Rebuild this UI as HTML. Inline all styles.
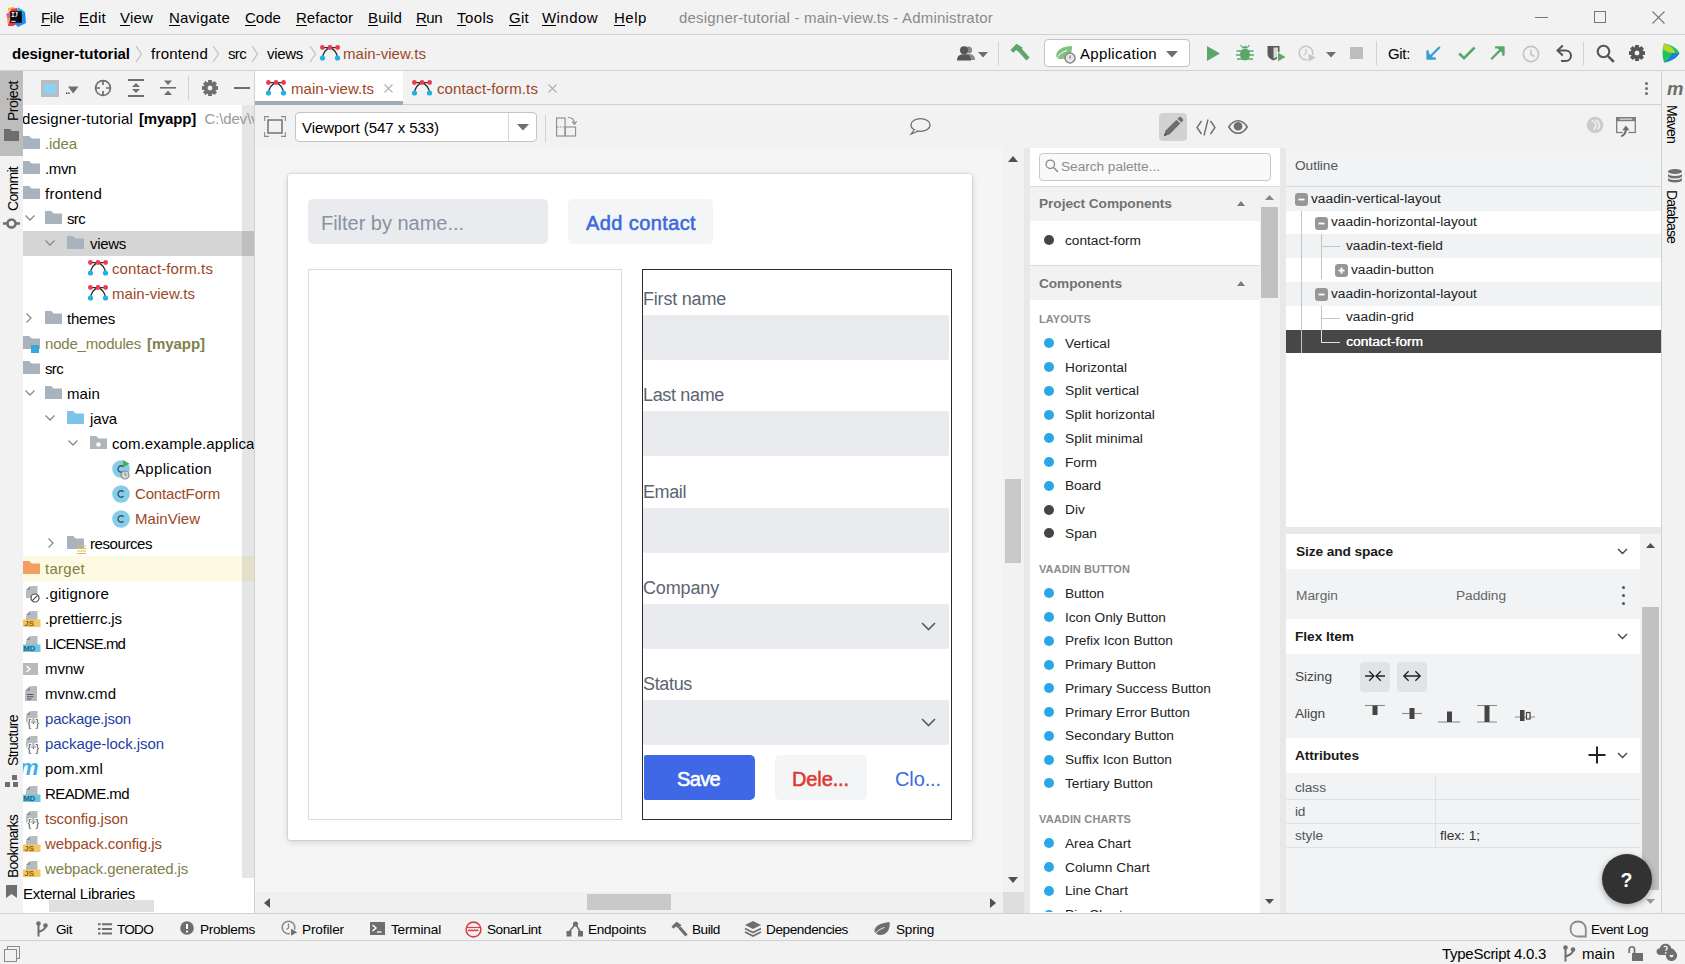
<!DOCTYPE html>
<html><head><meta charset="utf-8"><title>designer-tutorial</title><style>
html,body{margin:0;padding:0;}
body{width:1685px;height:964px;overflow:hidden;background:#f2f2f2;font-family:"Liberation Sans",sans-serif;position:relative;}
.b{position:absolute;box-sizing:border-box;}
.t{position:absolute;white-space:nowrap;font-family:"Liberation Sans",sans-serif;}
svg{overflow:visible}
</style></head><body>
<div class="b" style="left:0px;top:71px;width:23px;height:842px;background:#f2f2f2;"></div>
<div class="b" style="left:0px;top:71px;width:23px;height:85px;background:#bdbdbd;"></div>
<div class="t" style="left:13px;top:121px;font-size:14px;line-height:18px;height:18px;color:#000;letter-spacing:-0.510px;transform-origin:0 0;transform:rotate(-90deg) translateY(-9px);">Project</div>
<div class="t" style="left:13px;top:211px;font-size:14px;line-height:18px;height:18px;color:#000;letter-spacing:-0.704px;transform-origin:0 0;transform:rotate(-90deg) translateY(-9px);">Commit</div>
<div class="t" style="left:13px;top:766px;font-size:14px;line-height:18px;height:18px;color:#000;letter-spacing:-0.644px;transform-origin:0 0;transform:rotate(-90deg) translateY(-9px);">Structure</div>
<div class="t" style="left:13px;top:878px;font-size:14px;line-height:18px;height:18px;color:#000;letter-spacing:-0.780px;transform-origin:0 0;transform:rotate(-90deg) translateY(-9px);">Bookmarks</div>
<svg class="b" style="left:4px;top:129px;" width="15" height="12" viewBox="0 0 15 12"><path d="M0 0H6L8 2H15V12H0Z" fill="#6e6e6e"/></svg>
<svg class="b" style="left:3px;top:217px;" width="17" height="13" viewBox="0 0 17 13"><circle cx="8.5" cy="6.5" r="4" fill="none" stroke="#6e6e6e" stroke-width="2.6"/><path d="M0 6.5H4M13 6.5H17" stroke="#6e6e6e" stroke-width="2.4"/></svg>
<svg class="b" style="left:5px;top:775px;" width="14" height="12" viewBox="0 0 14 12"><rect x="7" y="0" width="5" height="5" fill="#6e6e6e"/><rect x="0" y="7" width="5" height="5" fill="#6e6e6e"/><rect x="8" y="7" width="5" height="5" fill="#6e6e6e"/></svg>
<svg class="b" style="left:6px;top:885px;" width="11" height="13" viewBox="0 0 11 13"><path d="M0 0H11V13L5.5 9L0 13Z" fill="#6e6e6e"/></svg>
<div class="b" style="left:23px;top:105px;width:219px;height:808px;background:#fff;"></div>
<div class="b" style="left:242px;top:105px;width:12px;height:808px;background:#fff;"></div>
<div class="b" style="left:254px;top:71px;width:1px;height:842px;background:#d1d1d1;"></div>
<div class="b" style="left:23px;top:231px;width:231px;height:25px;background:#d5d5d5;"></div>
<div class="b" style="left:23px;top:556px;width:231px;height:25px;background:#fcfae1;"></div>
<div class="b" style="left:242px;top:105px;width:12px;height:773px;background:rgba(0,0,0,0.1);"></div>
<div class="b" style="left:23px;top:106px;width:231px;height:25px;overflow:hidden">
<div class="t " style="left:-1px;top:2.0px;height:21px;line-height:21px;font-size:15px;color:#000;letter-spacing:0.203px;">designer-tutorial</div>
<div class="t " style="left:116px;top:2.0px;height:21px;line-height:21px;font-size:15px;color:#000;font-weight:bold;letter-spacing:-0.191px;">[myapp]</div>
<div class="t " style="left:181.5px;top:2.0px;height:21px;line-height:21px;font-size:15px;color:#999;letter-spacing:-0.151px;">C:\dev\va</div>
</div>
<div class="t " style="left:45px;top:133.0px;height:21px;line-height:21px;font-size:15px;color:#80804a;letter-spacing:-0.105px;">.idea</div>
<div class="t " style="left:45px;top:158.0px;height:21px;line-height:21px;font-size:15px;color:#000;letter-spacing:-0.376px;">.mvn</div>
<div class="t " style="left:45px;top:183.0px;height:21px;line-height:21px;font-size:15px;color:#000;letter-spacing:0.245px;">frontend</div>
<div class="t " style="left:67px;top:208.0px;height:21px;line-height:21px;font-size:15px;color:#000;letter-spacing:-0.665px;">src</div>
<div class="t " style="left:90px;top:233.0px;height:21px;line-height:21px;font-size:15px;color:#000;letter-spacing:-0.302px;">views</div>
<div class="t " style="left:112px;top:258.0px;height:21px;line-height:21px;font-size:15px;color:#9c4726;letter-spacing:0.121px;">contact-form.ts</div>
<div class="t " style="left:112px;top:283.0px;height:21px;line-height:21px;font-size:15px;color:#9c4726;letter-spacing:0.040px;">main-view.ts</div>
<div class="t " style="left:67px;top:308.0px;height:21px;line-height:21px;font-size:15px;color:#000;letter-spacing:-0.198px;">themes</div>
<div class="t " style="left:45px;top:333.0px;height:21px;line-height:21px;font-size:15px;color:#80804a;letter-spacing:-0.201px;">node_modules</div>
<div class="t " style="left:147px;top:333.0px;height:21px;line-height:21px;font-size:15px;color:#80804a;font-weight:bold;letter-spacing:-0.048px;">[myapp]</div>
<div class="t " style="left:45px;top:358.0px;height:21px;line-height:21px;font-size:15px;color:#000;letter-spacing:-0.665px;">src</div>
<div class="t " style="left:67px;top:383.0px;height:21px;line-height:21px;font-size:15px;color:#000;letter-spacing:0.122px;">main</div>
<div class="t " style="left:90px;top:408.0px;height:21px;line-height:21px;font-size:15px;color:#000;letter-spacing:-0.129px;">java</div>
<div class="b" style="left:112px;top:431px;width:142px;height:25px;overflow:hidden">
<div class="t " style="left:0px;top:2.0px;height:21px;line-height:21px;font-size:15px;color:#000;letter-spacing:0.083px;">com.example.application</div>
</div>
<div class="t " style="left:135px;top:458.0px;height:21px;line-height:21px;font-size:15px;color:#000;letter-spacing:0.329px;">Application</div>
<div class="t " style="left:135px;top:483.0px;height:21px;line-height:21px;font-size:15px;color:#9c4726;letter-spacing:-0.154px;">ContactForm</div>
<div class="t " style="left:135px;top:508.0px;height:21px;line-height:21px;font-size:15px;color:#9c4726;letter-spacing:0.031px;">MainView</div>
<div class="t " style="left:90px;top:533.0px;height:21px;line-height:21px;font-size:15px;color:#000;letter-spacing:-0.429px;">resources</div>
<div class="t " style="left:45px;top:558.0px;height:21px;line-height:21px;font-size:15px;color:#80804a;letter-spacing:0.274px;">target</div>
<div class="t " style="left:45px;top:583.0px;height:21px;line-height:21px;font-size:15px;color:#000;letter-spacing:0.229px;">.gitignore</div>
<div class="t " style="left:45px;top:608.0px;height:21px;line-height:21px;font-size:15px;color:#000;letter-spacing:-0.096px;">.prettierrc.js</div>
<div class="t " style="left:45px;top:633.0px;height:21px;line-height:21px;font-size:15px;color:#000;letter-spacing:-0.919px;">LICENSE.md</div>
<div class="t " style="left:45px;top:658.0px;height:21px;line-height:21px;font-size:15px;color:#000;letter-spacing:-0.043px;">mvnw</div>
<div class="t " style="left:45px;top:683.0px;height:21px;line-height:21px;font-size:15px;color:#000;letter-spacing:0.019px;">mvnw.cmd</div>
<div class="t " style="left:45px;top:708.0px;height:21px;line-height:21px;font-size:15px;color:#1f3f9f;letter-spacing:-0.200px;">package.json</div>
<div class="t " style="left:45px;top:733.0px;height:21px;line-height:21px;font-size:15px;color:#1f3f9f;letter-spacing:-0.063px;">package-lock.json</div>
<div class="t " style="left:45px;top:758.0px;height:21px;line-height:21px;font-size:15px;color:#000;letter-spacing:0.189px;">pom.xml</div>
<div class="t " style="left:45px;top:783.0px;height:21px;line-height:21px;font-size:15px;color:#000;letter-spacing:-0.576px;">README.md</div>
<div class="t " style="left:45px;top:808.0px;height:21px;line-height:21px;font-size:15px;color:#9c4726;letter-spacing:-0.029px;">tsconfig.json</div>
<div class="t " style="left:45px;top:833.0px;height:21px;line-height:21px;font-size:15px;color:#9c4726;letter-spacing:-0.082px;">webpack.config.js</div>
<div class="t " style="left:45px;top:858.0px;height:21px;line-height:21px;font-size:15px;color:#80804a;letter-spacing:-0.146px;">webpack.generated.js</div>
<div class="t " style="left:23px;top:883.0px;height:21px;line-height:21px;font-size:15px;color:#000;letter-spacing:-0.262px;">External Libraries</div>
<div class="b" style="left:23px;top:106px;width:219px;height:806px;overflow:hidden">
<svg class="b" style="left:0px;top:30px;" width="17" height="13" viewBox="0 0 17 13"><path d="M0 0H6.2L8.6 2.6H17V13H0Z" fill="#a9b3be"/></svg>
<svg class="b" style="left:0px;top:55px;" width="17" height="13" viewBox="0 0 17 13"><path d="M0 0H6.2L8.6 2.6H17V13H0Z" fill="#a9b3be"/></svg>
<svg class="b" style="left:0px;top:80px;" width="17" height="13" viewBox="0 0 17 13"><path d="M0 0H6.2L8.6 2.6H17V13H0Z" fill="#a9b3be"/></svg>
<svg class="b" style="left:0px;top:230px;" width="17" height="13" viewBox="0 0 17 13"><path d="M0 0H6.2L8.6 2.6H17V13H0Z" fill="#a9b3be"/></svg>
<svg class="b" style="left:0px;top:255px;" width="17" height="13" viewBox="0 0 17 13"><path d="M0 0H6.2L8.6 2.6H17V13H0Z" fill="#a9b3be"/></svg>
<svg class="b" style="left:0px;top:455px;" width="17" height="13" viewBox="0 0 17 13"><path d="M0 0H6.2L8.6 2.6H17V13H0Z" fill="#f49d62"/></svg>
<svg class="b" style="left:8px;top:239px;" width="8" height="8" viewBox="0 0 8 8"><rect width="8" height="8" fill="#35a8dc"/></svg>
<svg class="b" style="left:1px;top:480px;" width="16" height="16" viewBox="0 0 16 16"><path d="M7 0H13.5V12H2V5Z" fill="#b7bbc0"/><path d="M6 0V4H2Z" fill="#90959c"/><circle cx="11" cy="12" r="4" fill="#fff" stroke="#4d4d4d" stroke-width="1.2"/><path d="M8.3 14.7L13.7 9.3" stroke="#4d4d4d" stroke-width="1.2"/></svg>
<svg class="b" style="left:1px;top:505px;" width="16" height="16" viewBox="0 0 16 16"><path d="M7 0H13.5V12H2V5Z" fill="#b7bbc0"/><path d="M6 0V4H2Z" fill="#90959c"/><rect x="-1" y="8.5" width="17.5" height="7.5" fill="#f5c762"/><text x="0.2" y="15.3" font-size="8" font-weight="bold" fill="#8a6414" font-family="Liberation Sans">JS</text></svg>
<svg class="b" style="left:1px;top:530px;" width="16" height="16" viewBox="0 0 16 16"><path d="M7 0H13.5V12H2V5Z" fill="#b7bbc0"/><path d="M6 0V4H2Z" fill="#90959c"/><rect x="-1" y="8.5" width="17.5" height="7.5" fill="#6cc5e6"/><text x="-0.6" y="15.2" font-size="7.6" font-weight="bold" fill="#23607c" font-family="Liberation Sans">MD</text></svg>
<svg class="b" style="left:1px;top:555px;" width="16" height="16" viewBox="0 0 16 16"><rect x="-1" y="2" width="15" height="12" fill="#b7bbc0"/><path d="M2.5 5L6 8L2.5 11" stroke="#fff" stroke-width="1.5" fill="none"/></svg>
<svg class="b" style="left:1px;top:580px;" width="16" height="16" viewBox="0 0 16 16"><path d="M7 0H13V15H1V6Z" fill="#b7bbc0"/><path d="M6 0V5H1Z" fill="#90959c"/><path d="M3 8.5H9.5M3 10.8H9.5M3 13H7.5" stroke="#555" stroke-width="1.1"/></svg>
<svg class="b" style="left:1px;top:605px;" width="16" height="16" viewBox="0 0 16 16"><path d="M7 0H13.5V12H2V5Z" fill="#b7bbc0"/><path d="M6 0V4H2Z" fill="#90959c"/><text x="3.6" y="15.8" font-size="11" textLength="11.5" fill="#4d4d4d" stroke="#fff" stroke-width="2.2" paint-order="stroke" font-family="Liberation Sans">{}</text><circle cx="9.4" cy="12.3" r="0.7" fill="#4d4d4d"/></svg>
<svg class="b" style="left:1px;top:630px;" width="16" height="16" viewBox="0 0 16 16"><path d="M7 0H13.5V12H2V5Z" fill="#b7bbc0"/><path d="M6 0V4H2Z" fill="#90959c"/><text x="3.6" y="15.8" font-size="11" textLength="11.5" fill="#4d4d4d" stroke="#fff" stroke-width="2.2" paint-order="stroke" font-family="Liberation Sans">{}</text><circle cx="9.4" cy="12.3" r="0.7" fill="#4d4d4d"/></svg>
<svg class="b" style="left:-1px;top:655px;" width="16" height="16" viewBox="0 0 16 16"><text x="-3" y="14" font-size="22" font-style="italic" font-weight="bold" fill="#3fb0e6" font-family="Liberation Sans">m</text></svg>
<svg class="b" style="left:1px;top:680px;" width="16" height="16" viewBox="0 0 16 16"><path d="M7 0H13.5V12H2V5Z" fill="#b7bbc0"/><path d="M6 0V4H2Z" fill="#90959c"/><rect x="-1" y="8.5" width="17.5" height="7.5" fill="#6cc5e6"/><text x="-0.6" y="15.2" font-size="7.6" font-weight="bold" fill="#23607c" font-family="Liberation Sans">MD</text></svg>
<svg class="b" style="left:1px;top:705px;" width="16" height="16" viewBox="0 0 16 16"><path d="M7 0H13.5V12H2V5Z" fill="#b7bbc0"/><path d="M6 0V4H2Z" fill="#90959c"/><text x="3.6" y="15.8" font-size="11" textLength="11.5" fill="#4d4d4d" stroke="#fff" stroke-width="2.2" paint-order="stroke" font-family="Liberation Sans">{}</text><circle cx="9.4" cy="12.3" r="0.7" fill="#4d4d4d"/></svg>
<svg class="b" style="left:1px;top:730px;" width="16" height="16" viewBox="0 0 16 16"><path d="M7 0H13.5V12H2V5Z" fill="#b7bbc0"/><path d="M6 0V4H2Z" fill="#90959c"/><rect x="-1" y="8.5" width="17.5" height="7.5" fill="#f5c762"/><text x="0.2" y="15.3" font-size="8" font-weight="bold" fill="#8a6414" font-family="Liberation Sans">JS</text></svg>
<svg class="b" style="left:1px;top:755px;" width="16" height="16" viewBox="0 0 16 16"><path d="M7 0H13.5V12H2V5Z" fill="#b7bbc0"/><path d="M6 0V4H2Z" fill="#90959c"/><rect x="-1" y="8.5" width="17.5" height="7.5" fill="#f5c762"/><text x="0.2" y="15.3" font-size="8" font-weight="bold" fill="#8a6414" font-family="Liberation Sans">JS</text></svg>
</div>
<svg class="b" style="left:45px;top:211px;" width="17" height="13" viewBox="0 0 17 13"><path d="M0 0H6.2L8.6 2.6H17V13H0Z" fill="#a9b3be"/></svg>
<svg class="b" style="left:25px;top:215px;" width="10" height="6" viewBox="0 0 10 6"><path d="M0.5 0.5L5 5L9.5 0.5" fill="none" stroke="#8a8a8a" stroke-width="1.3"/></svg>
<svg class="b" style="left:45px;top:311px;" width="17" height="13" viewBox="0 0 17 13"><path d="M0 0H6.2L8.6 2.6H17V13H0Z" fill="#a9b3be"/></svg>
<svg class="b" style="left:26px;top:313px;" width="6" height="10" viewBox="0 0 6 10"><path d="M0.5 0.5L5 5L0.5 9.5" fill="none" stroke="#8a8a8a" stroke-width="1.3"/></svg>
<svg class="b" style="left:45px;top:386px;" width="17" height="13" viewBox="0 0 17 13"><path d="M0 0H6.2L8.6 2.6H17V13H0Z" fill="#a9b3be"/></svg>
<svg class="b" style="left:25px;top:390px;" width="10" height="6" viewBox="0 0 10 6"><path d="M0.5 0.5L5 5L9.5 0.5" fill="none" stroke="#8a8a8a" stroke-width="1.3"/></svg>
<svg class="b" style="left:67px;top:236px;" width="17" height="13" viewBox="0 0 17 13"><path d="M0 0H6.2L8.6 2.6H17V13H0Z" fill="#a9b3be"/></svg>
<svg class="b" style="left:45px;top:240px;" width="10" height="6" viewBox="0 0 10 6"><path d="M0.5 0.5L5 5L9.5 0.5" fill="none" stroke="#8a8a8a" stroke-width="1.3"/></svg>
<svg class="b" style="left:67px;top:411px;" width="17" height="13" viewBox="0 0 17 13"><path d="M0 0H6.2L8.6 2.6H17V13H0Z" fill="#7cc4ea"/></svg>
<svg class="b" style="left:45px;top:415px;" width="10" height="6" viewBox="0 0 10 6"><path d="M0.5 0.5L5 5L9.5 0.5" fill="none" stroke="#8a8a8a" stroke-width="1.3"/></svg>
<svg class="b" style="left:67px;top:536px;" width="17" height="13" viewBox="0 0 17 13"><path d="M0 0H6.2L8.6 2.6H17V13H0Z" fill="#a9b3be"/></svg>
<svg class="b" style="left:48px;top:538px;" width="6" height="10" viewBox="0 0 6 10"><path d="M0.5 0.5L5 5L0.5 9.5" fill="none" stroke="#8a8a8a" stroke-width="1.3"/></svg>
<svg class="b" style="left:77px;top:545px;" width="9" height="9" viewBox="0 0 9 9"><path d="M0 1H9M0 3.5H9M0 6H9M0 8.5H9" stroke="#e0b95c" stroke-width="1.2"/></svg>
<svg class="b" style="left:88px;top:260px;" width="20" height="16" viewBox="0 0 20 16"><path d="M2.3 13C3.2 8 6 4 10 2.6C14 4 16.8 8 17.7 13" fill="none" stroke="#26282b" stroke-width="1.3"/><path d="M2.5 2.6H17.5" stroke="#26282b" stroke-width="1.2"/><circle cx="2.4" cy="2.5" r="2.4" fill="#eb3b52"/><circle cx="10" cy="2.5" r="2.4" fill="#eb3b52"/><circle cx="17.6" cy="2.5" r="2.4" fill="#eb3b52"/><circle cx="2.5" cy="13" r="2.6" fill="#1eb3e3"/><circle cx="17.5" cy="13" r="2.6" fill="#1eb3e3"/></svg>
<svg class="b" style="left:88px;top:285px;" width="20" height="16" viewBox="0 0 20 16"><path d="M2.3 13C3.2 8 6 4 10 2.6C14 4 16.8 8 17.7 13" fill="none" stroke="#26282b" stroke-width="1.3"/><path d="M2.5 2.6H17.5" stroke="#26282b" stroke-width="1.2"/><circle cx="2.4" cy="2.5" r="2.4" fill="#eb3b52"/><circle cx="10" cy="2.5" r="2.4" fill="#eb3b52"/><circle cx="17.6" cy="2.5" r="2.4" fill="#eb3b52"/><circle cx="2.5" cy="13" r="2.6" fill="#1eb3e3"/><circle cx="17.5" cy="13" r="2.6" fill="#1eb3e3"/></svg>
<svg class="b" style="left:90px;top:436px;" width="17" height="13" viewBox="0 0 17 13"><path d="M0 0H6.2L8.6 2.6H17V13H0Z" fill="#b0b5ba"/></svg>
<svg class="b" style="left:68px;top:440px;" width="10" height="6" viewBox="0 0 10 6"><path d="M0.5 0.5L5 5L9.5 0.5" fill="none" stroke="#8a8a8a" stroke-width="1.3"/></svg>
<svg class="b" style="left:96px;top:442px;" width="5" height="5" viewBox="0 0 5 5"><circle cx="2.5" cy="2.5" r="2.3" fill="#fff"/></svg>
<svg class="b" style="left:112px;top:459.5px;" width="18" height="18" viewBox="0 0 18 18"><circle cx="9" cy="9" r="8.8" fill="#86cdea"/><path d="M11.6 6.9A3.2 3.2 0 1 0 11.6 11.1" fill="none" stroke="#3a5560" stroke-width="1.4"/></svg>
<svg class="b" style="left:112px;top:484.5px;" width="18" height="18" viewBox="0 0 18 18"><circle cx="9" cy="9" r="8.8" fill="#86cdea"/><path d="M11.6 6.9A3.2 3.2 0 1 0 11.6 11.1" fill="none" stroke="#3a5560" stroke-width="1.4"/></svg>
<svg class="b" style="left:112px;top:509.5px;" width="18" height="18" viewBox="0 0 18 18"><circle cx="9" cy="9" r="8.8" fill="#86cdea"/><path d="M11.6 6.9A3.2 3.2 0 1 0 11.6 11.1" fill="none" stroke="#3a5560" stroke-width="1.4"/></svg>
<svg class="b" style="left:122px;top:460px;" width="8" height="8" viewBox="0 0 8 8"><path d="M1 0L7.5 3.7L1 7.5Z" fill="#4caf50"/></svg>
<svg class="b" style="left:120px;top:470px;" width="10" height="10" viewBox="0 0 10 10"><circle cx="5" cy="5" r="4" fill="#d8d8d8" stroke="#8a8a8a" stroke-width="1.2"/><path d="M5 2.5V5H7" stroke="#8a8a8a" stroke-width="1" fill="none"/></svg>
<div class="b" style="left:23px;top:71px;width:231px;height:34px;background:#f2f2f2;"></div>
<div class="b" style="left:49px;top:900px;width:105px;height:12px;background:#e0e0e0;"></div>
<svg class="b" style="left:41px;top:80px;" width="18" height="17" viewBox="0 0 18 17"><rect x="0.5" y="0.5" width="17" height="16" fill="#8fd1f0" stroke="#b9bdc1" stroke-width="1"/><rect x="0" y="0" width="18" height="4" fill="#b9bdc1"/><rect x="0" y="4" width="3" height="13" fill="#b9bdc1"/><rect x="15" y="4" width="3" height="13" fill="#b9bdc1"/><rect x="0" y="14" width="18" height="3" fill="#b9bdc1"/></svg>
<svg class="b" style="left:66px;top:86px;" width="13" height="9" viewBox="0 0 13 9"><path d="M2 0.5H12.5L7.2 7.5Z" fill="#6e6e6e"/><rect x="0" y="6.5" width="1.3" height="1.5" fill="#333"/><rect x="2.3" y="6.5" width="1.3" height="1.5" fill="#333"/></svg>
<svg class="b" style="left:94px;top:79px;" width="18" height="18" viewBox="0 0 18 18"><circle cx="9" cy="9" r="7.4" fill="none" stroke="#6e6e6e" stroke-width="1.7"/><path d="M9 1.5V6M9 12V16.5M1.5 9H6M12 9H16.5" stroke="#6e6e6e" stroke-width="1.7"/></svg>
<svg class="b" style="left:128px;top:79px;" width="16" height="18" viewBox="0 0 16 18"><rect x="0" y="0" width="16" height="2" fill="#6e6e6e"/><rect x="0" y="16" width="16" height="2" fill="#6e6e6e"/><path d="M8 4L12 8H4Z" fill="#6e6e6e"/><path d="M8 14L12 10H4Z" fill="#6e6e6e"/></svg>
<svg class="b" style="left:160px;top:79px;" width="16" height="18" viewBox="0 0 16 18"><rect x="0" y="8" width="16" height="1.6" fill="#6e6e6e"/><path d="M8 6L12 1.5H4Z" fill="#6e6e6e"/><path d="M8 11.5L12 16H4Z" fill="#6e6e6e"/></svg>
<div class="b" style="left:188px;top:76px;width:1px;height:24px;background:#d1d1d1;"></div>
<svg class="b" style="left:202px;top:80px;" width="16" height="16" viewBox="0 0 16 16"><g transform="translate(8 8)"><rect x="-1.9" y="-8" width="3.8" height="5.5" fill="#6e6e6e" transform="rotate(0)"/><rect x="-1.9" y="-8" width="3.8" height="5.5" fill="#6e6e6e" transform="rotate(45)"/><rect x="-1.9" y="-8" width="3.8" height="5.5" fill="#6e6e6e" transform="rotate(90)"/><rect x="-1.9" y="-8" width="3.8" height="5.5" fill="#6e6e6e" transform="rotate(135)"/><rect x="-1.9" y="-8" width="3.8" height="5.5" fill="#6e6e6e" transform="rotate(180)"/><rect x="-1.9" y="-8" width="3.8" height="5.5" fill="#6e6e6e" transform="rotate(225)"/><rect x="-1.9" y="-8" width="3.8" height="5.5" fill="#6e6e6e" transform="rotate(270)"/><rect x="-1.9" y="-8" width="3.8" height="5.5" fill="#6e6e6e" transform="rotate(315)"/><circle r="4.48" fill="none" stroke="#6e6e6e" stroke-width="3.52"/></g></svg>
<div class="b" style="left:234px;top:87px;width:16px;height:2px;background:#6e6e6e;"></div>
<div class="b" style="left:0px;top:34px;width:1685px;height:1px;background:#d1d1d1;"></div>
<div class="t " style="left:41px;top:7.0px;height:21px;line-height:21px;font-size:15px;color:#000;letter-spacing:-0.293px;">File</div>
<div class="b" style="left:41px;top:25px;width:9px;height:1px;background:#000;"></div>
<div class="t " style="left:79px;top:7.0px;height:21px;line-height:21px;font-size:15px;color:#000;letter-spacing:0.288px;">Edit</div>
<div class="b" style="left:79px;top:25px;width:10px;height:1px;background:#000;"></div>
<div class="t " style="left:120px;top:7.0px;height:21px;line-height:21px;font-size:15px;color:#000;letter-spacing:0.189px;">View</div>
<div class="b" style="left:120px;top:25px;width:10px;height:1px;background:#000;"></div>
<div class="t " style="left:169px;top:7.0px;height:21px;line-height:21px;font-size:15px;color:#000;letter-spacing:0.225px;">Navigate</div>
<div class="b" style="left:169px;top:25px;width:11px;height:1px;background:#000;"></div>
<div class="t " style="left:245px;top:7.0px;height:21px;line-height:21px;font-size:15px;color:#000;letter-spacing:0.035px;">Code</div>
<div class="b" style="left:245px;top:25px;width:11px;height:1px;background:#000;"></div>
<div class="t " style="left:296px;top:7.0px;height:21px;line-height:21px;font-size:15px;color:#000;letter-spacing:0.039px;">Refactor</div>
<div class="b" style="left:296px;top:25px;width:11px;height:1px;background:#000;"></div>
<div class="t " style="left:368px;top:7.0px;height:21px;line-height:21px;font-size:15px;color:#000;letter-spacing:0.129px;">Build</div>
<div class="b" style="left:368px;top:25px;width:10px;height:1px;background:#000;"></div>
<div class="t " style="left:416px;top:7.0px;height:21px;line-height:21px;font-size:15px;color:#000;letter-spacing:-0.506px;">Run</div>
<div class="b" style="left:416px;top:25px;width:11px;height:1px;background:#000;"></div>
<div class="t " style="left:457px;top:7.0px;height:21px;line-height:21px;font-size:15px;color:#000;letter-spacing:0.397px;">Tools</div>
<div class="b" style="left:457px;top:25px;width:9px;height:1px;background:#000;"></div>
<div class="t " style="left:509px;top:7.0px;height:21px;line-height:21px;font-size:15px;color:#000;letter-spacing:0.278px;">Git</div>
<div class="b" style="left:509px;top:25px;width:12px;height:1px;background:#000;"></div>
<div class="t " style="left:542px;top:7.0px;height:21px;line-height:21px;font-size:15px;color:#000;letter-spacing:0.442px;">Window</div>
<div class="b" style="left:542px;top:25px;width:14px;height:1px;background:#000;"></div>
<div class="t " style="left:614px;top:7.0px;height:21px;line-height:21px;font-size:15px;color:#000;letter-spacing:0.537px;">Help</div>
<div class="b" style="left:614px;top:25px;width:11px;height:1px;background:#000;"></div>
<div class="t " style="left:679px;top:7.0px;height:21px;line-height:21px;font-size:15px;color:#8a8a8a;letter-spacing:0.203px;">designer-tutorial - main-view.ts - Administrator</div>
<div class="b" style="left:1535px;top:17px;width:13px;height:1px;background:#777;"></div>
<div class="b" style="left:1594px;top:11px;width:12px;height:12px;border:1px solid #777;"></div>
<svg class="b" style="left:1652px;top:11px;" width="13" height="13" viewBox="0 0 13 13"><path d="M0.5 0.5L12.5 12.5M12.5 0.5L0.5 12.5" stroke="#777" stroke-width="1.1" fill="none"/></svg>
<div class="b" style="left:0px;top:70px;width:1685px;height:1px;background:#d1d1d1;"></div>
<div class="t " style="left:12px;top:43.0px;height:21px;line-height:21px;font-size:15px;color:#000;font-weight:bold;letter-spacing:-0.020px;">designer-tutorial</div>
<div class="t " style="left:151px;top:43.0px;height:21px;line-height:21px;font-size:15px;color:#000;letter-spacing:0.245px;">frontend</div>
<div class="t " style="left:228px;top:43.0px;height:21px;line-height:21px;font-size:15px;color:#000;letter-spacing:-0.665px;">src</div>
<div class="t " style="left:267px;top:43.0px;height:21px;line-height:21px;font-size:15px;color:#000;letter-spacing:-0.302px;">views</div>
<div class="t " style="left:343px;top:43.0px;height:21px;line-height:21px;font-size:15px;color:#9c4726;letter-spacing:0.040px;">main-view.ts</div>
<svg class="b" style="left:135px;top:45px;" width="8" height="18" viewBox="0 0 8 18"><path d="M1 1L6.5 9L1 17" stroke="#c0c0c0" stroke-width="1.2" fill="none"/></svg>
<svg class="b" style="left:212px;top:45px;" width="8" height="18" viewBox="0 0 8 18"><path d="M1 1L6.5 9L1 17" stroke="#c0c0c0" stroke-width="1.2" fill="none"/></svg>
<svg class="b" style="left:251px;top:45px;" width="8" height="18" viewBox="0 0 8 18"><path d="M1 1L6.5 9L1 17" stroke="#c0c0c0" stroke-width="1.2" fill="none"/></svg>
<svg class="b" style="left:309px;top:45px;" width="8" height="18" viewBox="0 0 8 18"><path d="M1 1L6.5 9L1 17" stroke="#c0c0c0" stroke-width="1.2" fill="none"/></svg>
<svg class="b" style="left:957px;top:46px;" width="19" height="15" viewBox="0 0 19 15"><circle cx="11.5" cy="4" r="3.6" fill="#8a8a8a"/><path d="M5 14C5 9.5 8 8 11.5 8C15 8 18 9.5 18 14Z" fill="#8a8a8a"/><circle cx="7" cy="4.2" r="4" fill="#555"/><path d="M0 14.5C0 9.5 3 8.2 7 8.2C11 8.2 14 9.5 14 14.5Z" fill="#555"/></svg>
<svg class="b" style="left:978px;top:52px;" width="10" height="6" viewBox="0 0 10 6"><path d="M0 0H10L5 5.5Z" fill="#6e6e6e"/></svg>
<div class="b" style="left:998px;top:42px;width:1px;height:23px;background:#d1d1d1;"></div>
<svg class="b" style="left:1010px;top:43px;" width="20" height="19" viewBox="0 0 20 19"><path d="M9.5 6.5L18 16" stroke="#59a869" stroke-width="4.4" stroke-linecap="butt"/><path d="M0.5 7L6.5 0.8L12.8 4.8L8.8 9L6.2 7L3.2 9.8Z" fill="#59a869"/></svg>
<div class="b" style="left:1044px;top:39px;width:146px;height:28px;background:#fff;border:1px solid #c4c4c4;border-radius:4px;"></div>
<svg class="b" style="left:1055px;top:44px;" width="22" height="20" viewBox="0 0 22 20"><path d="M1 13C1 5 8 2.5 17 2C17.5 9 14 15 6 15C4 15 2.5 14.5 1 13Z" fill="#6db56d" opacity="0.85"/><path d="M0.5 15.5C3 11 7 8 12 6.5" stroke="#fff" stroke-width="1" fill="none"/><circle cx="15" cy="14" r="5" fill="#e6e6e6" stroke="#8a8a8a" stroke-width="1.6"/><path d="M15 11.5V14.5" stroke="#8a8a8a" stroke-width="1.5"/></svg>
<div class="t " style="left:1080px;top:43.0px;height:21px;line-height:21px;font-size:15px;color:#000;letter-spacing:0.329px;">Application</div>
<svg class="b" style="left:1166px;top:51px;" width="12" height="7" viewBox="0 0 12 7"><path d="M0 0H12L6 6.5Z" fill="#6e6e6e"/></svg>
<svg class="b" style="left:1207px;top:46px;" width="13" height="15" viewBox="0 0 13 15"><path d="M0 0L13 7.5L0 15Z" fill="#59a869"/></svg>
<svg class="b" style="left:1236px;top:44px;" width="18" height="18" viewBox="0 0 18 18"><ellipse cx="9" cy="10.5" rx="5" ry="6" fill="#59a869"/><path d="M5.8 4.2A3.4 3.4 0 0 1 12.2 4.2Z" fill="#59a869"/><path d="M0.5 7H17.5M0 11H18M1 15H17" stroke="#59a869" stroke-width="1.5"/><path d="M4.5 1L6.5 3.5M13.5 1L11.5 3.5" stroke="#59a869" stroke-width="1.2"/></svg>
<svg class="b" style="left:1267px;top:45px;" width="20" height="17" viewBox="0 0 20 17"><path d="M0.5 1H12.5V9C12.5 12.5 9 14.5 6.5 15.5C4 14.5 0.5 12.5 0.5 9Z" fill="#5a5a5a"/><path d="M6.5 2.5H11V9C11 11 9.5 12.5 6.5 13.8Z" fill="#d9d9d9"/><path d="M10.5 7L19.5 12L10.5 17Z" fill="#59a869" stroke="#f2f2f2" stroke-width="1"/></svg>
<svg class="b" style="left:1298px;top:45px;" width="19" height="18" viewBox="0 0 19 18"><circle cx="8" cy="8" r="6.8" fill="none" stroke="#c6c6c6" stroke-width="1.6"/><path d="M8 4V8.5L5.5 10" stroke="#c6c6c6" stroke-width="1.3" fill="none"/><path d="M10 8L18.5 12.8L10 17.5Z" fill="#c6c6c6" stroke="#f2f2f2" stroke-width="1"/></svg>
<svg class="b" style="left:1326px;top:52px;" width="10" height="6" viewBox="0 0 10 6"><path d="M0 0H10L5 5.5Z" fill="#6e6e6e"/></svg>
<div class="b" style="left:1350px;top:47px;width:13px;height:12px;background:#bdbdbd;"></div>
<div class="b" style="left:1376px;top:41px;width:1px;height:24px;background:#d1d1d1;"></div>
<div class="t " style="left:1388px;top:43.0px;height:21px;line-height:21px;font-size:15px;color:#000;letter-spacing:-0.334px;">Git:</div>
<svg class="b" style="left:1426px;top:46px;" width="15" height="14" viewBox="0 0 15 14"><path d="M13.8 1L4.5 10.3" stroke="#389fd6" stroke-width="2.3" fill="none"/><path d="M0.6 13.6V4.8L3.2 7.4L9.4 13.6Z" fill="#389fd6"/><path d="M0.6 13.6V4.2L2.8 4.2V11.4H10V13.6Z" fill="#389fd6"/></svg>
<svg class="b" style="left:1458px;top:46px;" width="18" height="14" viewBox="0 0 18 14"><path d="M1.2 7.5L6 12.2L16.6 1.5" stroke="#59a869" stroke-width="2.6" fill="none"/></svg>
<svg class="b" style="left:1490px;top:46px;" width="15" height="14" viewBox="0 0 15 14"><path d="M1.2 13.2L10.5 3.9" stroke="#59a869" stroke-width="2.3" fill="none"/><path d="M14.4 0.4V9.8H12.2V2.6H5V0.4Z" fill="#59a869"/><path d="M14.4 0.4V9L5.8 0.4Z" fill="#59a869"/></svg>
<svg class="b" style="left:1522px;top:45px;" width="18" height="18" viewBox="0 0 18 18"><circle cx="9" cy="9" r="7.6" fill="none" stroke="#c4c4c4" stroke-width="1.6"/><path d="M9 4.5V9.5L12.5 11.5" stroke="#c4c4c4" stroke-width="1.5" fill="none"/></svg>
<svg class="b" style="left:1555px;top:44px;" width="18" height="19" viewBox="0 0 18 19"><path d="M3.5 6.5H10.5C14 6.5 16 9 16 11.8C16 14.8 13.8 17 10.5 17H6" fill="none" stroke="#555" stroke-width="2"/><path d="M7.8 1.5L2.5 6.5L7.8 11.5" fill="none" stroke="#555" stroke-width="2"/></svg>
<div class="b" style="left:1583px;top:42px;width:1px;height:23px;background:#d1d1d1;"></div>
<svg class="b" style="left:1596px;top:44px;" width="19" height="19" viewBox="0 0 19 19"><circle cx="7.5" cy="7.5" r="5.8" fill="none" stroke="#555" stroke-width="2.1"/><path d="M11.8 11.8L17.8 17.8" stroke="#555" stroke-width="2.6"/></svg>
<svg class="b" style="left:1629px;top:45px;" width="16" height="16" viewBox="0 0 16 16"><g transform="translate(8 8)"><rect x="-1.9" y="-8" width="3.8" height="5.5" fill="#555" transform="rotate(0)"/><rect x="-1.9" y="-8" width="3.8" height="5.5" fill="#555" transform="rotate(45)"/><rect x="-1.9" y="-8" width="3.8" height="5.5" fill="#555" transform="rotate(90)"/><rect x="-1.9" y="-8" width="3.8" height="5.5" fill="#555" transform="rotate(135)"/><rect x="-1.9" y="-8" width="3.8" height="5.5" fill="#555" transform="rotate(180)"/><rect x="-1.9" y="-8" width="3.8" height="5.5" fill="#555" transform="rotate(225)"/><rect x="-1.9" y="-8" width="3.8" height="5.5" fill="#555" transform="rotate(270)"/><rect x="-1.9" y="-8" width="3.8" height="5.5" fill="#555" transform="rotate(315)"/><circle r="4.48" fill="none" stroke="#555" stroke-width="3.52"/></g></svg>
<svg class="b" style="left:1661px;top:43px;" width="19" height="20" viewBox="0 0 19 20"><path d="M3 0.5C10 1.5 16 5 18.5 10C16 15 10 18.5 3 19.5C1 13 1 7 3 0.5Z" fill="#21c45a"/><path d="M3 0.5C9 2 13 5.5 14 10C10 10.5 5 9 2 6C2.2 4 2.5 2.3 3 0.5Z" fill="#b6d531"/><path d="M18.5 10C16 15 10 18.5 3 19.5C7 17 10 14 11 10Z" fill="#1c7fe0"/></svg>
<svg class="b" style="left:6px;top:6px;" width="21" height="21" viewBox="0 0 21 21"><path d="M2 2L8 1L10 9L4 12Z" fill="#fcb421"/><path d="M0 8L5 5L8 12L2 14Z" fill="#f5589a"/><path d="M1 13L6 10L9 19L2 20Z" fill="#f0a020" opacity="0.9"/><path d="M5 3L11 2L13 10L6 12Z" fill="#ee2f5e"/><path d="M2 20L4 14L12 17L7 20Z" fill="#ee2f5e"/><path d="M12 1.5L19 6L20 17L12 21L8 17L11 8Z" fill="#1f8cf0"/><path d="M12 1.5L18 5L16 9L11 7Z" fill="#1fb5ea"/><rect x="4.2" y="5.2" width="11.6" height="11.6" fill="#0a0a0a"/><path d="M5.6 6.6H8.4M7 6.6V10.4M5.6 10.4H8.4M9.6 6.6H11.6M10.9 6.6V9.3C10.9 10.7 9.5 10.7 9.1 9.9" stroke="#fff" stroke-width="1" fill="none"/><rect x="5.2" y="14.8" width="4.4" height="1" fill="#fff"/></svg>
<div class="b" style="left:255px;top:71px;width:1406px;height:34px;background:#f2f2f2;"></div>
<div class="b" style="left:255px;top:104px;width:1406px;height:1px;background:#d1d1d1;"></div>
<div class="b" style="left:255px;top:71px;width:148px;height:34px;background:#fff;"></div>
<div class="b" style="left:255px;top:101px;width:148px;height:4px;background:#a0a8b9;"></div>
<svg class="b" style="left:266px;top:80px;" width="20" height="16" viewBox="0 0 20 16"><path d="M2.3 13C3.2 8 6 4 10 2.6C14 4 16.8 8 17.7 13" fill="none" stroke="#26282b" stroke-width="1.3"/><path d="M2.5 2.6H17.5" stroke="#26282b" stroke-width="1.2"/><circle cx="2.4" cy="2.5" r="2.4" fill="#eb3b52"/><circle cx="10" cy="2.5" r="2.4" fill="#eb3b52"/><circle cx="17.6" cy="2.5" r="2.4" fill="#eb3b52"/><circle cx="2.5" cy="13" r="2.6" fill="#1eb3e3"/><circle cx="17.5" cy="13" r="2.6" fill="#1eb3e3"/></svg>
<div class="t " style="left:291px;top:77.5px;height:21px;line-height:21px;font-size:15px;color:#9c4726;letter-spacing:0.040px;">main-view.ts</div>
<svg class="b" style="left:384px;top:84px;" width="9" height="9" viewBox="0 0 9 9"><path d="M0.5 0.5L8.5 8.5M8.5 0.5L0.5 8.5" stroke="#b0b0b0" stroke-width="1.1"/></svg>
<svg class="b" style="left:412px;top:80px;" width="20" height="16" viewBox="0 0 20 16"><path d="M2.3 13C3.2 8 6 4 10 2.6C14 4 16.8 8 17.7 13" fill="none" stroke="#26282b" stroke-width="1.3"/><path d="M2.5 2.6H17.5" stroke="#26282b" stroke-width="1.2"/><circle cx="2.4" cy="2.5" r="2.4" fill="#eb3b52"/><circle cx="10" cy="2.5" r="2.4" fill="#eb3b52"/><circle cx="17.6" cy="2.5" r="2.4" fill="#eb3b52"/><circle cx="2.5" cy="13" r="2.6" fill="#1eb3e3"/><circle cx="17.5" cy="13" r="2.6" fill="#1eb3e3"/></svg>
<div class="t " style="left:437px;top:77.5px;height:21px;line-height:21px;font-size:15px;color:#9c4726;letter-spacing:0.121px;">contact-form.ts</div>
<svg class="b" style="left:548px;top:84px;" width="9" height="9" viewBox="0 0 9 9"><path d="M0.5 0.5L8.5 8.5M8.5 0.5L0.5 8.5" stroke="#b0b0b0" stroke-width="1.1"/></svg>
<div class="b" style="left:1645px;top:82px;width:3px;height:3px;background:#6e6e6e;border-radius:50%"></div>
<div class="b" style="left:1645px;top:87px;width:3px;height:3px;background:#6e6e6e;border-radius:50%"></div>
<div class="b" style="left:1645px;top:92px;width:3px;height:3px;background:#6e6e6e;border-radius:50%"></div>
<svg class="b" style="left:320px;top:45px;" width="20" height="16" viewBox="0 0 20 16"><path d="M2.3 13C3.2 8 6 4 10 2.6C14 4 16.8 8 17.7 13" fill="none" stroke="#26282b" stroke-width="1.3"/><path d="M2.5 2.6H17.5" stroke="#26282b" stroke-width="1.2"/><circle cx="2.4" cy="2.5" r="2.4" fill="#eb3b52"/><circle cx="10" cy="2.5" r="2.4" fill="#eb3b52"/><circle cx="17.6" cy="2.5" r="2.4" fill="#eb3b52"/><circle cx="2.5" cy="13" r="2.6" fill="#1eb3e3"/><circle cx="17.5" cy="13" r="2.6" fill="#1eb3e3"/></svg>
<div class="b" style="left:255px;top:105px;width:1406px;height:43px;background:#f2f2f2;"></div>
<svg class="b" style="left:264px;top:116px;" width="22" height="21" viewBox="0 0 22 21"><rect x="4" y="4" width="14" height="13" fill="none" stroke="#7a7a7a" stroke-width="1.6"/><path d="M0.6 5V0.6H5M17 0.6H21.4V5M21.4 16V20.4H17M5 20.4H0.6V16" fill="none" stroke="#8a8a8a" stroke-width="1.1"/></svg>
<div class="b" style="left:295px;top:112px;width:242px;height:30px;background:#fff;border:1px solid #c4c4c4;border-radius:4px;"></div>
<div class="b" style="left:508px;top:113px;width:1px;height:28px;background:#d4d4d4;"></div>
<div class="t " style="left:302px;top:117.0px;height:21px;line-height:21px;font-size:15px;color:#000;letter-spacing:-0.057px;">Viewport (547 x 533)</div>
<svg class="b" style="left:517px;top:124px;" width="12" height="7" viewBox="0 0 12 7"><path d="M0 0H12L6 6.5Z" fill="#6e6e6e"/></svg>
<div class="b" style="left:545px;top:115px;width:1px;height:27px;background:#d1d1d1;"></div>
<svg class="b" style="left:556px;top:116px;" width="21" height="21" viewBox="0 0 21 21"><rect x="0.6" y="2" width="8.5" height="18" fill="none" stroke="#8a8a8a" stroke-width="1.1"/><rect x="9.1" y="11" width="10.5" height="9" fill="none" stroke="#8a8a8a" stroke-width="1.1"/><path d="M1 11H9" stroke="#8a8a8a" stroke-width="0.9" stroke-dasharray="1.5 1.2"/><path d="M12 1.5C16 1.5 18.2 3.8 18.4 7.2" fill="none" stroke="#8a8a8a" stroke-width="1.1"/><path d="M16 5.5L18.5 8.3L20.6 5.2" fill="none" stroke="#8a8a8a" stroke-width="1.1"/></svg>
<svg class="b" style="left:909px;top:118px;" width="22" height="17" viewBox="0 0 22 17"><ellipse cx="11.5" cy="7" rx="9.6" ry="6.3" fill="none" stroke="#6e6e6e" stroke-width="1.3"/><path d="M5.5 11.5L2 16L9.5 13" fill="#f2f2f2" stroke="#6e6e6e" stroke-width="1.2"/></svg>
<div class="b" style="left:1159px;top:113px;width:28px;height:28px;background:#d2d2d2;border-radius:4px;"></div>
<svg class="b" style="left:1162px;top:116px;" width="22" height="22" viewBox="0 0 22 22"><path d="M2.2 19.8L3.6 14.6L14.5 3.7L18.3 7.5L7.4 18.4Z" fill="#6e6e6e"/><path d="M15.5 2.7L17 1.2C17.6 0.6 18.5 0.6 19.1 1.2L20.8 2.9C21.4 3.5 21.4 4.4 20.8 5L19.3 6.5Z" fill="#6e6e6e"/><path d="M2 20L2.8 17.2L4.8 19.2Z" fill="#444"/></svg>
<svg class="b" style="left:1196px;top:119px;" width="20" height="17" viewBox="0 0 20 17"><path d="M5.5 2L1 8.5L5.5 15M14.5 2L19 8.5L14.5 15M12 0.5L8 16.5" fill="none" stroke="#6e6e6e" stroke-width="1.4"/></svg>
<svg class="b" style="left:1228px;top:120px;" width="20" height="14" viewBox="0 0 20 14"><path d="M0.8 7C3.5 2.5 7 0.8 10 0.8C13 0.8 16.5 2.5 19.2 7C16.5 11.5 13 13.2 10 13.2C7 13.2 3.5 11.5 0.8 7Z" fill="none" stroke="#6e6e6e" stroke-width="1.5"/><circle cx="10" cy="6.3" r="4.3" fill="#6e6e6e"/></svg>
<svg class="b" style="left:1586px;top:116px;" width="18" height="18" viewBox="0 0 18 18"><circle cx="9" cy="9" r="8.3" fill="#cbcbcb"/><path d="M5.5 4.5C8.5 5.5 10 7.5 10 9C10 11 8.5 12 8 14M9.5 4C12.5 5.5 13.5 7.5 13.5 9.5C13.5 11 12.5 12.5 11.5 13.5" stroke="#efefef" stroke-width="1.7" fill="none"/></svg>
<svg class="b" style="left:1616px;top:117px;" width="20" height="20" viewBox="0 0 20 20"><rect x="0.7" y="0.7" width="18.6" height="14.8" fill="none" stroke="#7d7d7d" stroke-width="1.3"/><rect x="0" y="0" width="20" height="4.2" fill="#7d7d7d"/><rect x="3.6" y="1.5" width="12.6" height="1.2" fill="#e4e4e4"/><rect x="6.8" y="14" width="5.6" height="3" fill="#f2f2f2"/><path d="M9.9 12C9.9 16 8.5 18.2 5.2 19.2" fill="none" stroke="#6e6e6e" stroke-width="2"/><path d="M6.3 13.2L9.9 8.6L13.5 13.2Z" fill="#6e6e6e"/></svg>
<div class="b" style="left:255px;top:148px;width:769px;height:765px;background:#f5f5f5;"></div>
<div class="b" style="left:288px;top:174px;width:684px;height:666px;background:#fff;border-radius:2px;box-shadow:0 2px 7px rgba(0,0,0,0.14), 0 0 2px rgba(0,0,0,0.28);"></div>
<div class="b" style="left:308px;top:199px;width:240px;height:45px;background:#e9ebee;border-radius:5px;"></div>
<div class="t " style="left:321px;top:209.0px;height:28px;line-height:28px;font-size:20px;color:#8a92a0;letter-spacing:-0.022px;">Filter by name...</div>
<div class="b" style="left:568px;top:199px;width:145px;height:45px;background:#f3f5f7;border-radius:5px;"></div>
<div class="t " style="left:586px;top:209.0px;height:28px;line-height:28px;font-size:20px;color:#3b69dc;letter-spacing:0.398px;-webkit-text-stroke:0.55px #3b69dc;">Add contact</div>
<div class="b" style="left:308px;top:269px;width:314px;height:551px;background:#fff;border:1px solid #d9dbde;"></div>
<div class="b" style="left:642px;top:269px;width:310px;height:551px;background:#fff;border:1px solid #2b2b2b;"></div>
<div class="t " style="left:643px;top:286.5px;height:25px;line-height:25px;font-size:18px;color:#5b6472;letter-spacing:-0.202px;">First name</div>
<div class="b" style="left:643px;top:315px;width:306px;height:45px;background:#e9ebee;border-radius:2px;"></div>
<div class="t " style="left:643px;top:382.5px;height:25px;line-height:25px;font-size:18px;color:#5b6472;letter-spacing:-0.339px;">Last name</div>
<div class="b" style="left:643px;top:411px;width:306px;height:45px;background:#e9ebee;border-radius:2px;"></div>
<div class="t " style="left:643px;top:479.5px;height:25px;line-height:25px;font-size:18px;color:#5b6472;letter-spacing:-0.402px;">Email</div>
<div class="b" style="left:643px;top:508px;width:306px;height:45px;background:#e9ebee;border-radius:2px;"></div>
<div class="t " style="left:643px;top:575.5px;height:25px;line-height:25px;font-size:18px;color:#5b6472;letter-spacing:-0.148px;">Company</div>
<div class="b" style="left:643px;top:604px;width:306px;height:45px;background:#e9ebee;border-radius:2px;"></div>
<div class="t " style="left:643px;top:671.5px;height:25px;line-height:25px;font-size:18px;color:#5b6472;letter-spacing:-0.339px;">Status</div>
<div class="b" style="left:643px;top:700px;width:306px;height:45px;background:#e9ebee;border-radius:2px;"></div>
<svg class="b" style="left:921px;top:622px;" width="15" height="9" viewBox="0 0 15 9"><path d="M1 1L7.5 7.5L14 1" fill="none" stroke="#55606e" stroke-width="1.7"/></svg>
<svg class="b" style="left:921px;top:718px;" width="15" height="9" viewBox="0 0 15 9"><path d="M1 1L7.5 7.5L14 1" fill="none" stroke="#55606e" stroke-width="1.7"/></svg>
<div class="b" style="left:644px;top:755px;width:111px;height:45px;background:#3f68e6;border-radius:2px 5px 5px 2px;"></div>
<div class="t " style="left:677px;top:764.5px;height:28px;line-height:28px;font-size:20px;color:#fff;letter-spacing:-0.647px;-webkit-text-stroke:0.6px #fff;">Save</div>
<div class="b" style="left:775px;top:755px;width:92px;height:45px;background:#f3f5f7;border-radius:5px;"></div>
<div class="t " style="left:792px;top:764.5px;height:28px;line-height:28px;font-size:20px;color:#e0382e;letter-spacing:-0.115px;-webkit-text-stroke:0.55px #e0382e;">Dele...</div>
<div class="t " style="left:895px;top:764.5px;height:28px;line-height:28px;font-size:20px;color:#3b69dc;letter-spacing:-0.113px;">Clo...</div>
<div class="b" style="left:1003px;top:148px;width:21px;height:765px;background:#f2f2f2;"></div>
<div class="b" style="left:1005px;top:479px;width:16px;height:84px;background:#c9c9c9;"></div>
<svg class="b" style="left:1008px;top:156px;" width="10" height="6" viewBox="0 0 10 6"><path d="M5 0L10 6H0Z" fill="#505050"/></svg>
<svg class="b" style="left:1008px;top:877px;" width="10" height="6" viewBox="0 0 10 6"><path d="M5 6L10 0H0Z" fill="#505050"/></svg>
<div class="b" style="left:255px;top:892px;width:748px;height:21px;background:#f0f0f0;"></div>
<div class="b" style="left:1003px;top:892px;width:21px;height:21px;background:#dedede;"></div>
<div class="b" style="left:587px;top:894px;width:84px;height:16px;background:#c9c9c9;"></div>
<svg class="b" style="left:264px;top:898px;" width="6" height="10" viewBox="0 0 6 10"><path d="M0 5L6 0V10Z" fill="#505050"/></svg>
<svg class="b" style="left:990px;top:898px;" width="6" height="10" viewBox="0 0 6 10"><path d="M6 5L0 0V10Z" fill="#505050"/></svg>
<div class="b" style="left:1024px;top:148px;width:6px;height:765px;background:#e8e8e8;"></div>
<div class="b" style="left:1030px;top:148px;width:250px;height:765px;background:#fff;"></div>
<div class="b" style="left:1039px;top:153px;width:232px;height:28px;background:#f9f9f9;border:1px solid #c9c9c9;border-radius:4px;"></div>
<svg class="b" style="left:1045px;top:159px;" width="14" height="14" viewBox="0 0 14 14"><circle cx="5.3" cy="5.3" r="4.2" fill="none" stroke="#8a8a8a" stroke-width="1.3"/><path d="M8.3 8.3L13 13" stroke="#8a8a8a" stroke-width="1.5"/></svg>
<div class="t " style="left:1061px;top:157.0px;height:19px;line-height:19px;font-size:13.7px;color:#8c8c8c;letter-spacing:-0.045px;">Search palette...</div>
<div class="b" style="left:1030px;top:186px;width:250px;height:1px;background:#dcdcdc;"></div>
<div class="b" style="left:1260px;top:187px;width:20px;height:726px;background:#f1f1f1;"></div>
<div class="b" style="left:1261px;top:207px;width:17px;height:91px;background:#c1c1c1;"></div>
<svg class="b" style="left:1265px;top:195px;" width="9" height="5" viewBox="0 0 9 5"><path d="M4.5 0L9 5H0Z" fill="#8a8a8a"/></svg>
<svg class="b" style="left:1265px;top:899px;" width="9" height="5" viewBox="0 0 9 5"><path d="M4.5 5L9 0H0Z" fill="#505050"/></svg>
<div class="b" style="left:1030px;top:187px;width:230px;height:34px;background:#f2f2f2;"></div>
<div class="t " style="left:1039px;top:193.5px;height:19px;line-height:19px;font-size:13.7px;color:#727272;font-weight:bold;letter-spacing:-0.054px;">Project Components</div>
<svg class="b" style="left:1237px;top:201px;" width="8" height="5" viewBox="0 0 8 5"><path d="M4 0L8 5H0Z" fill="#7a7a7a"/></svg>
<div class="b" style="left:1030px;top:265px;width:230px;height:1px;background:#dcdcdc;"></div>
<div class="b" style="left:1030px;top:266px;width:230px;height:34px;background:#f2f2f2;"></div>
<div class="t " style="left:1039px;top:273.5px;height:19px;line-height:19px;font-size:13.7px;color:#727272;font-weight:bold;letter-spacing:-0.072px;">Components</div>
<svg class="b" style="left:1237px;top:281px;" width="8" height="5" viewBox="0 0 8 5"><path d="M4 0L8 5H0Z" fill="#7a7a7a"/></svg>
<div class="b" style="left:1044px;top:235.3px;width:10px;height:10px;background:#454545;border-radius:50%;"></div>
<div class="t " style="left:1065px;top:230.8px;height:19px;line-height:19px;font-size:13.7px;color:#222;letter-spacing:-0.011px;">contact-form</div>
<div class="t " style="left:1039px;top:311.8px;height:15px;line-height:15px;font-size:11px;color:#8c8c8c;font-weight:bold;letter-spacing:0.065px;">LAYOUTS</div>
<div class="b" style="left:1044px;top:338.3px;width:10px;height:10px;background:#2ba6e9;border-radius:50%;"></div>
<div class="t " style="left:1065px;top:333.8px;height:19px;line-height:19px;font-size:13.7px;color:#222;letter-spacing:0.009px;">Vertical</div>
<div class="b" style="left:1044px;top:362.1px;width:10px;height:10px;background:#2ba6e9;border-radius:50%;"></div>
<div class="t " style="left:1065px;top:357.6px;height:19px;line-height:19px;font-size:13.7px;color:#222;letter-spacing:0.033px;">Horizontal</div>
<div class="b" style="left:1044px;top:385.8px;width:10px;height:10px;background:#2ba6e9;border-radius:50%;"></div>
<div class="t " style="left:1065px;top:381.3px;height:19px;line-height:19px;font-size:13.7px;color:#222;letter-spacing:0.011px;">Split vertical</div>
<div class="b" style="left:1044px;top:409.6px;width:10px;height:10px;background:#2ba6e9;border-radius:50%;"></div>
<div class="t " style="left:1065px;top:405.1px;height:19px;line-height:19px;font-size:13.7px;color:#222;letter-spacing:0.009px;">Split horizontal</div>
<div class="b" style="left:1044px;top:433.3px;width:10px;height:10px;background:#2ba6e9;border-radius:50%;"></div>
<div class="t " style="left:1065px;top:428.8px;height:19px;line-height:19px;font-size:13.7px;color:#222;letter-spacing:0.027px;">Split minimal</div>
<div class="b" style="left:1044px;top:457.1px;width:10px;height:10px;background:#2ba6e9;border-radius:50%;"></div>
<div class="t " style="left:1065px;top:452.6px;height:19px;line-height:19px;font-size:13.7px;color:#222;letter-spacing:0.009px;">Form</div>
<div class="b" style="left:1044px;top:480.8px;width:10px;height:10px;background:#2ba6e9;border-radius:50%;"></div>
<div class="t " style="left:1065px;top:476.3px;height:19px;line-height:19px;font-size:13.7px;color:#222;letter-spacing:-0.111px;">Board</div>
<div class="b" style="left:1044px;top:504.6px;width:10px;height:10px;background:#454545;border-radius:50%;"></div>
<div class="t " style="left:1065px;top:500.1px;height:19px;line-height:19px;font-size:13.7px;color:#222;letter-spacing:0.071px;">Div</div>
<div class="b" style="left:1044px;top:528.3px;width:10px;height:10px;background:#454545;border-radius:50%;"></div>
<div class="t " style="left:1065px;top:523.8px;height:19px;line-height:19px;font-size:13.7px;color:#222;letter-spacing:0.002px;">Span</div>
<div class="t " style="left:1039px;top:561.8px;height:15px;line-height:15px;font-size:11px;color:#8c8c8c;font-weight:bold;letter-spacing:0.074px;">VAADIN BUTTON</div>
<div class="b" style="left:1044px;top:588.3px;width:10px;height:10px;background:#2ba6e9;border-radius:50%;"></div>
<div class="t " style="left:1065px;top:583.8px;height:19px;line-height:19px;font-size:13.7px;color:#222;letter-spacing:-0.101px;">Button</div>
<div class="b" style="left:1044px;top:612.0px;width:10px;height:10px;background:#2ba6e9;border-radius:50%;"></div>
<div class="t " style="left:1065px;top:607.5px;height:19px;line-height:19px;font-size:13.7px;color:#222;letter-spacing:-0.018px;">Icon Only Button</div>
<div class="b" style="left:1044px;top:635.8px;width:10px;height:10px;background:#2ba6e9;border-radius:50%;"></div>
<div class="t " style="left:1065px;top:631.3px;height:19px;line-height:19px;font-size:13.7px;color:#222;letter-spacing:-0.007px;">Prefix Icon Button</div>
<div class="b" style="left:1044px;top:659.5px;width:10px;height:10px;background:#2ba6e9;border-radius:50%;"></div>
<div class="t " style="left:1065px;top:655.0px;height:19px;line-height:19px;font-size:13.7px;color:#222;letter-spacing:0.029px;">Primary Button</div>
<div class="b" style="left:1044px;top:683.3px;width:10px;height:10px;background:#2ba6e9;border-radius:50%;"></div>
<div class="t " style="left:1065px;top:678.8px;height:19px;line-height:19px;font-size:13.7px;color:#222;letter-spacing:-0.008px;">Primary Success Button</div>
<div class="b" style="left:1044px;top:707.0px;width:10px;height:10px;background:#2ba6e9;border-radius:50%;"></div>
<div class="t " style="left:1065px;top:702.5px;height:19px;line-height:19px;font-size:13.7px;color:#222;letter-spacing:0.008px;">Primary Error Button</div>
<div class="b" style="left:1044px;top:730.8px;width:10px;height:10px;background:#2ba6e9;border-radius:50%;"></div>
<div class="t " style="left:1065px;top:726.3px;height:19px;line-height:19px;font-size:13.7px;color:#222;letter-spacing:0.006px;">Secondary Button</div>
<div class="b" style="left:1044px;top:754.5px;width:10px;height:10px;background:#2ba6e9;border-radius:50%;"></div>
<div class="t " style="left:1065px;top:750.0px;height:19px;line-height:19px;font-size:13.7px;color:#222;letter-spacing:-0.007px;">Suffix Icon Button</div>
<div class="b" style="left:1044px;top:778.3px;width:10px;height:10px;background:#2ba6e9;border-radius:50%;"></div>
<div class="t " style="left:1065px;top:773.8px;height:19px;line-height:19px;font-size:13.7px;color:#222;letter-spacing:-0.022px;">Tertiary Button</div>
<div class="t " style="left:1039px;top:811.8px;height:15px;line-height:15px;font-size:11px;color:#8c8c8c;font-weight:bold;letter-spacing:0.135px;">VAADIN CHARTS</div>
<div class="b" style="left:1044px;top:838.3px;width:10px;height:10px;background:#2ba6e9;border-radius:50%;"></div>
<div class="t " style="left:1065px;top:833.8px;height:19px;line-height:19px;font-size:13.7px;color:#222;letter-spacing:-0.024px;">Area Chart</div>
<div class="b" style="left:1044px;top:862.0px;width:10px;height:10px;background:#2ba6e9;border-radius:50%;"></div>
<div class="t " style="left:1065px;top:857.5px;height:19px;line-height:19px;font-size:13.7px;color:#222;letter-spacing:0.041px;">Column Chart</div>
<div class="b" style="left:1044px;top:885.8px;width:10px;height:10px;background:#2ba6e9;border-radius:50%;"></div>
<div class="t " style="left:1065px;top:881.3px;height:19px;line-height:19px;font-size:13.7px;color:#222;letter-spacing:-0.021px;">Line Chart</div>
<div class="b" style="left:1030px;top:900px;width:230px;height:12px;overflow:hidden">
<div class="b" style="left:14px;top:9.5px;width:10px;height:10px;background:#2ba6e9;border-radius:50%;"></div>
<div class="t " style="left:35px;top:5.0px;height:19px;line-height:19px;font-size:13.7px;color:#222;letter-spacing:0.099px;">Pie Chart</div>
</div>
<div class="b" style="left:1280px;top:148px;width:6px;height:765px;background:#e8e8e8;"></div>
<div class="b" style="left:1286px;top:148px;width:375px;height:39px;background:#f2f3f4;"></div>
<div class="t " style="left:1295px;top:156.0px;height:19px;line-height:19px;font-size:13.7px;color:#555;letter-spacing:-0.058px;">Outline</div>
<div class="b" style="left:1286px;top:186px;width:375px;height:1px;background:#d9d9d9;"></div>
<div class="b" style="left:1286px;top:187px;width:375px;height:340px;background:#fff;"></div>
<div class="b" style="left:1286px;top:187px;width:375px;height:24px;background:#f1f2f4;"></div>
<div class="b" style="left:1286px;top:234px;width:375px;height:24px;background:#f1f2f4;"></div>
<div class="b" style="left:1286px;top:282px;width:375px;height:24px;background:#f1f2f4;"></div>
<div class="b" style="left:1286px;top:330px;width:375px;height:23px;background:#474747;"></div>
<div class="b" style="left:1301px;top:211px;width:1px;height:142px;background:#c4c4c4;"></div>
<div class="b" style="left:1321px;top:234px;width:1px;height:45px;background:#c4c4c4;"></div>
<div class="b" style="left:1321px;top:306px;width:1px;height:36px;background:#c4c4c4;"></div>
<div class="b" style="left:1321px;top:246px;width:19px;height:1px;background:#c4c4c4;"></div>
<div class="b" style="left:1321px;top:318px;width:19px;height:1px;background:#c4c4c4;"></div>
<div class="b" style="left:1321px;top:330px;width:1px;height:13px;background:#e0e0e0;"></div>
<div class="b" style="left:1321px;top:342px;width:19px;height:1px;background:#e0e0e0;"></div>
<svg class="b" style="left:1295px;top:193px;" width="13" height="13" viewBox="0 0 13 13"><rect width="13" height="13" rx="3.2" fill="#979797"/><path d="M3.5 6.5H9.5" stroke="#fff" stroke-width="1.8"/></svg>
<svg class="b" style="left:1315px;top:217px;" width="13" height="13" viewBox="0 0 13 13"><rect width="13" height="13" rx="3.2" fill="#979797"/><path d="M3.5 6.5H9.5" stroke="#fff" stroke-width="1.8"/></svg>
<svg class="b" style="left:1335px;top:264px;" width="13" height="13" viewBox="0 0 13 13"><rect width="13" height="13" rx="3.2" fill="#979797"/><path d="M3.5 6.5H9.5" stroke="#fff" stroke-width="1.8"/><path d="M6.5 3.5V9.5" stroke="#fff" stroke-width="1.8"/></svg>
<svg class="b" style="left:1315px;top:288px;" width="13" height="13" viewBox="0 0 13 13"><rect width="13" height="13" rx="3.2" fill="#979797"/><path d="M3.5 6.5H9.5" stroke="#fff" stroke-width="1.8"/></svg>
<div class="t " style="left:1311px;top:188.7px;height:19px;line-height:19px;font-size:13.7px;color:#222;letter-spacing:0.025px;">vaadin-vertical-layout</div>
<div class="t " style="left:1331px;top:212.4px;height:19px;line-height:19px;font-size:13.7px;color:#222;letter-spacing:0.023px;">vaadin-horizontal-layout</div>
<div class="t " style="left:1346px;top:236.2px;height:19px;line-height:19px;font-size:13.7px;color:#222;letter-spacing:0.017px;">vaadin-text-field</div>
<div class="t " style="left:1351px;top:259.9px;height:19px;line-height:19px;font-size:13.7px;color:#222;letter-spacing:-0.001px;">vaadin-button</div>
<div class="t " style="left:1331px;top:283.7px;height:19px;line-height:19px;font-size:13.7px;color:#222;letter-spacing:0.023px;">vaadin-horizontal-layout</div>
<div class="t " style="left:1346px;top:307.4px;height:19px;line-height:19px;font-size:13.7px;color:#222;letter-spacing:0.020px;">vaadin-grid</div>
<div class="t " style="left:1346px;top:331.5px;height:19px;line-height:19px;font-size:13.7px;color:#fff;letter-spacing:0.072px;text-shadow:0.4px 0 0 #fff;">contact-form</div>
<div class="b" style="left:1286px;top:527px;width:375px;height:7px;background:#e8e8e8;"></div>
<div class="b" style="left:1286px;top:534px;width:375px;height:379px;background:#f1f3f5;"></div>
<div class="b" style="left:1640px;top:534px;width:21px;height:379px;background:#f2f2f2;"></div>
<div class="b" style="left:1642px;top:607px;width:17px;height:283px;background:#c1c1c1;"></div>
<svg class="b" style="left:1646px;top:543px;" width="9" height="5" viewBox="0 0 9 5"><path d="M4.5 0L9 5H0Z" fill="#505050"/></svg>
<svg class="b" style="left:1646px;top:899px;" width="9" height="5" viewBox="0 0 9 5"><path d="M4.5 5L9 0H0Z" fill="#9a9a9a"/></svg>
<div class="b" style="left:1286px;top:534px;width:354px;height:35px;background:#fff;"></div>
<div class="t " style="left:1296px;top:542.0px;height:19px;line-height:19px;font-size:13.7px;color:#1a1a1a;font-weight:bold;letter-spacing:-0.087px;">Size and space</div>
<svg class="b" style="left:1617px;top:548px;" width="11" height="7" viewBox="0 0 11 7"><path d="M1 1L5.5 5.5L10 1" fill="none" stroke="#444" stroke-width="1.4"/></svg>
<div class="t " style="left:1296px;top:585.5px;height:19px;line-height:19px;font-size:13.7px;color:#666;letter-spacing:0.021px;">Margin</div>
<div class="t " style="left:1456px;top:585.5px;height:19px;line-height:19px;font-size:13.7px;color:#666;letter-spacing:-0.039px;">Padding</div>
<div class="b" style="left:1622px;top:586px;width:3px;height:3px;background:#555;border-radius:50%;"></div>
<div class="b" style="left:1622px;top:594px;width:3px;height:3px;background:#555;border-radius:50%;"></div>
<div class="b" style="left:1622px;top:602px;width:3px;height:3px;background:#555;border-radius:50%;"></div>
<div class="b" style="left:1286px;top:619px;width:354px;height:35px;background:#fff;"></div>
<div class="t " style="left:1295px;top:627.0px;height:19px;line-height:19px;font-size:13.7px;color:#1a1a1a;font-weight:bold;letter-spacing:-0.043px;">Flex Item</div>
<svg class="b" style="left:1617px;top:633px;" width="11" height="7" viewBox="0 0 11 7"><path d="M1 1L5.5 5.5L10 1" fill="none" stroke="#444" stroke-width="1.4"/></svg>
<div class="t " style="left:1295px;top:667.0px;height:19px;line-height:19px;font-size:13.7px;color:#444;letter-spacing:-0.052px;">Sizing</div>
<div class="b" style="left:1360px;top:662px;width:30px;height:30px;background:#e1e4e7;border-radius:4px;"></div>
<div class="b" style="left:1397px;top:662px;width:30px;height:30px;background:#e1e4e7;border-radius:4px;"></div>
<svg class="b" style="left:1365px;top:670px;" width="20" height="12" viewBox="0 0 20 12"><path d="M0 6H8.5M11.5 6H20M4.2 1.2L9 6L4.2 10.8M15.8 1.2L11 6L15.8 10.8" fill="none" stroke="#222" stroke-width="1.3"/></svg>
<svg class="b" style="left:1403px;top:670px;" width="18" height="12" viewBox="0 0 18 12"><path d="M1 6H17M5.6 1.2L0.8 6L5.6 10.8M12.4 1.2L17.2 6L12.4 10.8" fill="none" stroke="#222" stroke-width="1.3"/></svg>
<div class="t " style="left:1295px;top:704.0px;height:19px;line-height:19px;font-size:13.7px;color:#444;letter-spacing:-0.092px;">Align</div>
<svg class="b" style="left:1365px;top:704px;" width="20" height="18" viewBox="0 0 20 18"><path d="M0 1.5H20" stroke="#8a8a8a" stroke-width="1.1"/><rect x="7.5" y="1.5" width="5" height="9.5" fill="#444"/></svg>
<svg class="b" style="left:1402px;top:704px;" width="20" height="18" viewBox="0 0 20 18"><path d="M0 9.5H20" stroke="#8a8a8a" stroke-width="1.1"/><rect x="7.5" y="4" width="5" height="11" fill="#444"/></svg>
<svg class="b" style="left:1438px;top:704px;" width="22" height="19" viewBox="0 0 22 19"><path d="M0 18H22" stroke="#8a8a8a" stroke-width="1.1"/><rect x="9" y="7.5" width="5" height="10.5" fill="#444"/></svg>
<svg class="b" style="left:1476px;top:704px;" width="22" height="19" viewBox="0 0 22 19"><path d="M1 1.5H21M1 18H21" stroke="#8a8a8a" stroke-width="1.1"/><rect x="8.5" y="1.5" width="5" height="16.5" fill="#444"/></svg>
<svg class="b" style="left:1515px;top:708px;" width="20" height="14" viewBox="0 0 20 14"><path d="M0 9H20" stroke="#8a8a8a" stroke-width="1"/><rect x="5" y="2" width="4.5" height="11" fill="#444"/><rect x="11.5" y="4.5" width="3.5" height="6.5" fill="#f1f3f5" stroke="#444" stroke-width="1.2"/></svg>
<div class="b" style="left:1286px;top:738px;width:354px;height:35px;background:#fff;"></div>
<div class="t " style="left:1295px;top:746.0px;height:19px;line-height:19px;font-size:13.7px;color:#1a1a1a;font-weight:bold;letter-spacing:-0.069px;">Attributes</div>
<svg class="b" style="left:1588px;top:746px;" width="18" height="18" viewBox="0 0 18 18"><path d="M9 0.5V17.5M0.5 9H17.5" stroke="#222" stroke-width="2"/></svg>
<svg class="b" style="left:1617px;top:752px;" width="11" height="7" viewBox="0 0 11 7"><path d="M1 1L5.5 5.5L10 1" fill="none" stroke="#444" stroke-width="1.4"/></svg>
<div class="b" style="left:1286px;top:799px;width:354px;height:1px;background:#dfe1e4;"></div>
<div class="b" style="left:1286px;top:823px;width:354px;height:1px;background:#dfe1e4;"></div>
<div class="b" style="left:1286px;top:847px;width:354px;height:1px;background:#dfe1e4;"></div>
<div class="b" style="left:1435px;top:776px;width:1px;height:72px;background:#dfe1e4;"></div>
<div class="t " style="left:1295px;top:777.5px;height:19px;line-height:19px;font-size:13.7px;color:#555;letter-spacing:-0.042px;">class</div>
<div class="t " style="left:1295px;top:801.5px;height:19px;line-height:19px;font-size:13.7px;color:#555;letter-spacing:-0.331px;">id</div>
<div class="t " style="left:1295px;top:825.5px;height:19px;line-height:19px;font-size:13.7px;color:#555;letter-spacing:-0.034px;">style</div>
<div class="t " style="left:1440px;top:825.5px;height:19px;line-height:19px;font-size:13.7px;color:#333;letter-spacing:-0.045px;">flex: 1;</div>
<div class="b" style="left:1602px;top:854px;width:50px;height:50px;background:#323232;border-radius:50%;box-shadow:0 2px 6px rgba(0,0,0,0.35);"></div>
<div class="t " style="left:1620.5px;top:866.5px;height:27px;line-height:27px;font-size:19.5px;color:#fff;font-weight:bold;">?</div>
<div class="b" style="left:1661px;top:71px;width:1px;height:842px;background:#d1d1d1;"></div>
<div class="b" style="left:1662px;top:71px;width:23px;height:842px;background:#f2f2f2;"></div>
<div class="t" style="left:1672px;top:105px;font-size:14px;line-height:18px;height:18px;color:#000;letter-spacing:-0.804px;transform-origin:0 0;transform:rotate(90deg) translateY(-9px);">Maven</div>
<div class="t" style="left:1672px;top:190px;font-size:14px;line-height:18px;height:18px;color:#000;letter-spacing:-0.866px;transform-origin:0 0;transform:rotate(90deg) translateY(-9px);">Database</div>
<div class="t" style="left:1667px;top:78px;font-size:18.5px;line-height:22px;letter-spacing:-0.5px;font-weight:bold;font-style:italic;color:#6e6e6e;">m</div>
<svg class="b" style="left:1668px;top:169px;" width="14" height="15" viewBox="0 0 14 15"><ellipse cx="7" cy="2.5" rx="7" ry="2.5" fill="#6e6e6e"/><path d="M0 5C1 7.5 13 7.5 14 5V7.5C13 10 1 10 0 7.5Z" fill="#6e6e6e"/><path d="M0 9C1 11.5 13 11.5 14 9V11.5C13 14 1 14 0 11.5Z" fill="#6e6e6e"/></svg>
<div class="b" style="left:0px;top:913px;width:1685px;height:1px;background:#d1d1d1;"></div>
<div class="b" style="left:0px;top:914px;width:1685px;height:27px;background:#f2f2f2;"></div>
<div class="b" style="left:0px;top:940px;width:1685px;height:1px;background:#d1d1d1;"></div>
<div class="b" style="left:0px;top:941px;width:1685px;height:23px;background:#f2f2f2;"></div>
<svg class="b" style="left:36px;top:921px;" width="12" height="16" viewBox="0 0 12 16"><circle cx="2.5" cy="2.5" r="2.3" fill="#6e6e6e"/><circle cx="9.5" cy="4.5" r="2.3" fill="#6e6e6e"/><path d="M2.5 3V15.5M9.5 5C9.5 9 6 9.5 2.5 11" fill="none" stroke="#6e6e6e" stroke-width="2"/></svg>
<div class="t " style="left:56px;top:919.8px;height:19px;line-height:19px;font-size:13.6px;color:#000;letter-spacing:-0.459px;">Git</div>
<svg class="b" style="left:98px;top:923px;" width="14" height="12" viewBox="0 0 14 12"><path d="M4 1.2H14M4 5.9H14M4 10.6H14" stroke="#6e6e6e" stroke-width="2"/><path d="M0 1.2H2.6M0 5.9H2.6M0 10.6H2.6" stroke="#6e6e6e" stroke-width="2"/></svg>
<div class="t " style="left:117px;top:919.8px;height:19px;line-height:19px;font-size:13.6px;color:#000;letter-spacing:-0.760px;">TODO</div>
<svg class="b" style="left:180px;top:921px;" width="14" height="14" viewBox="0 0 14 14"><circle cx="7" cy="7" r="6.8" fill="#6e6e6e"/><path d="M7 3V8" stroke="#fff" stroke-width="2"/><circle cx="7" cy="10.6" r="1.1" fill="#fff"/></svg>
<div class="t " style="left:200px;top:919.8px;height:19px;line-height:19px;font-size:13.6px;color:#000;letter-spacing:-0.306px;">Problems</div>
<svg class="b" style="left:281px;top:920px;" width="17" height="17" viewBox="0 0 17 17"><circle cx="7.5" cy="7.5" r="6.3" fill="none" stroke="#8a8a8a" stroke-width="1.6"/><path d="M7.5 3.5V8L5.5 9.5" stroke="#8a8a8a" stroke-width="1.3" fill="none"/><path d="M9.5 8L17 12.3L9.5 16.5Z" fill="#6e6e6e" stroke="#f2f2f2" stroke-width="1"/></svg>
<div class="t " style="left:302px;top:919.8px;height:19px;line-height:19px;font-size:13.6px;color:#000;letter-spacing:-0.135px;">Profiler</div>
<svg class="b" style="left:370px;top:922px;" width="15" height="13" viewBox="0 0 15 13"><rect width="15" height="13" fill="#6e6e6e"/><path d="M2.5 3L6 6L2.5 9" fill="none" stroke="#fff" stroke-width="1.5"/><path d="M7 10H11.5" stroke="#fff" stroke-width="1.3"/></svg>
<div class="t " style="left:391px;top:919.8px;height:19px;line-height:19px;font-size:13.6px;color:#000;letter-spacing:-0.174px;">Terminal</div>
<svg class="b" style="left:465px;top:921px;" width="17" height="17" viewBox="0 0 17 17"><circle cx="8.5" cy="8.5" r="7.4" fill="none" stroke="#d8414b" stroke-width="1.6"/><path d="M1.5 6.5H15.5" stroke="#d8414b" stroke-width="1.2"/><path d="M3 10L4.3 8.8L5.6 10L6.9 8.8L8.2 10L9.5 8.8L10.8 10L12.1 8.8L13.4 10" fill="none" stroke="#d8414b" stroke-width="1.1"/></svg>
<div class="t " style="left:487px;top:919.8px;height:19px;line-height:19px;font-size:13.6px;color:#000;letter-spacing:-0.469px;">SonarLint</div>
<svg class="b" style="left:566px;top:921px;" width="17" height="16" viewBox="0 0 17 16"><circle cx="9.5" cy="3" r="2.6" fill="#6e6e6e"/><rect x="0.5" y="10" width="5" height="5.5" fill="#6e6e6e"/><rect x="12" y="10" width="5" height="5.5" fill="#6e6e6e"/><path d="M3 11L9.5 3L14.5 11" fill="none" stroke="#6e6e6e" stroke-width="1.5"/></svg>
<div class="t " style="left:588px;top:919.8px;height:19px;line-height:19px;font-size:13.6px;color:#000;letter-spacing:-0.277px;">Endpoints</div>
<svg class="b" style="left:671px;top:921px;" width="17" height="16" viewBox="0 0 17 16"><path d="M8.5 6.5L15.5 14.5" stroke="#6e6e6e" stroke-width="3.2"/><path d="M0.5 5.5L5.5 0.8L10.5 4L7.5 7.5L5 5.5L2.5 7.8Z" fill="#6e6e6e"/></svg>
<div class="t " style="left:692px;top:919.8px;height:19px;line-height:19px;font-size:13.6px;color:#000;letter-spacing:-0.449px;">Build</div>
<svg class="b" style="left:745px;top:921px;" width="16" height="16" viewBox="0 0 16 16"><path d="M8 0L16 4L8 8L0 4Z" fill="#6e6e6e"/><path d="M0 7.5L8 11.5L16 7.5" fill="none" stroke="#6e6e6e" stroke-width="1.7"/><path d="M0 11L8 15L16 11" fill="none" stroke="#6e6e6e" stroke-width="1.7"/></svg>
<div class="t " style="left:766px;top:919.8px;height:19px;line-height:19px;font-size:13.6px;color:#000;letter-spacing:-0.413px;">Dependencies</div>
<svg class="b" style="left:874px;top:921px;" width="17" height="15" viewBox="0 0 17 15"><path d="M0.5 10.5C0.5 4.5 6 2.5 15.5 1C16.5 8 13 14 6 14C4 14 2 13 0.5 10.5Z" fill="#6e6e6e"/><path d="M0 14C3 10 6 8 10.5 6.5" stroke="#f2f2f2" stroke-width="1" fill="none"/></svg>
<div class="t " style="left:896px;top:919.8px;height:19px;line-height:19px;font-size:13.6px;color:#000;letter-spacing:-0.219px;">Spring</div>
<svg class="b" style="left:1569px;top:920px;" width="19" height="18" viewBox="0 0 19 18"><path d="M9 1.5C13.5 1.5 16.8 4.5 16.8 9V16.5H9C4.5 16.5 1.5 13.5 1.5 9C1.5 4.5 4.5 1.5 9 1.5Z" fill="none" stroke="#8a8a8a" stroke-width="1.8"/></svg>
<div class="t " style="left:1591px;top:919.8px;height:19px;line-height:19px;font-size:13.6px;color:#000;letter-spacing:-0.472px;">Event Log</div>
<svg class="b" style="left:4px;top:946px;" width="16" height="16" viewBox="0 0 16 16"><rect x="3.5" y="0.5" width="12" height="12" fill="none" stroke="#8a8a8a" stroke-width="1"/><rect x="0.5" y="3.5" width="12" height="12" fill="#f2f2f2" stroke="#8a8a8a" stroke-width="1"/></svg>
<div class="t " style="left:1442px;top:942.5px;height:21px;line-height:21px;font-size:15px;color:#000;letter-spacing:-0.274px;">TypeScript 4.0.3</div>
<svg class="b" style="left:1563px;top:945px;" width="13" height="17" viewBox="0 0 13 17"><circle cx="2.5" cy="2.5" r="2.3" fill="#6e6e6e"/><circle cx="10" cy="4.5" r="2.3" fill="#6e6e6e"/><path d="M2.5 3V16.5M10 5C10 9.5 6 10 2.5 11.5" fill="none" stroke="#6e6e6e" stroke-width="2"/></svg>
<div class="t " style="left:1582px;top:942.5px;height:21px;line-height:21px;font-size:15px;color:#000;letter-spacing:0.122px;">main</div>
<svg class="b" style="left:1628px;top:945px;" width="16" height="16" viewBox="0 0 16 16"><rect x="4" y="8" width="11" height="8" fill="#6e6e6e"/><path d="M1.2 8V4.5C1.2 0.8 6.5 0.8 6.5 4.5V8" fill="none" stroke="#6e6e6e" stroke-width="1.7"/></svg>
<svg class="b" style="left:1656px;top:943px;" width="23" height="20" viewBox="0 0 23 20"><path d="M4.5 12C1.5 12 0.5 10 0.5 8.5C0.5 6.5 2 5.2 3.8 5.2C4.5 2.5 6.5 0.8 9.5 0.8C13 0.8 15 3.2 15.3 5.5C17.5 5.7 19 7 19 9C19 10.8 17.8 12 16 12Z" fill="#6e6e6e"/><path d="M8 4.2C8.3 3 11.3 3 11.3 5C11.3 6.2 9.8 6.3 9.8 7.8" stroke="#f2f2f2" stroke-width="1.4" fill="none"/><circle cx="9.8" cy="10" r="0.9" fill="#f2f2f2"/></svg>
<svg class="b" style="left:1665.5px;top:949.5px;" width="11.0" height="11.0" viewBox="0 0 11.0 11.0"><g transform="translate(5.5 5.5)"><rect x="-1.9" y="-5.5" width="3.8" height="3.0" fill="#6e6e6e" transform="rotate(0)"/><rect x="-1.9" y="-5.5" width="3.8" height="3.0" fill="#6e6e6e" transform="rotate(45)"/><rect x="-1.9" y="-5.5" width="3.8" height="3.0" fill="#6e6e6e" transform="rotate(90)"/><rect x="-1.9" y="-5.5" width="3.8" height="3.0" fill="#6e6e6e" transform="rotate(135)"/><rect x="-1.9" y="-5.5" width="3.8" height="3.0" fill="#6e6e6e" transform="rotate(180)"/><rect x="-1.9" y="-5.5" width="3.8" height="3.0" fill="#6e6e6e" transform="rotate(225)"/><rect x="-1.9" y="-5.5" width="3.8" height="3.0" fill="#6e6e6e" transform="rotate(270)"/><rect x="-1.9" y="-5.5" width="3.8" height="3.0" fill="#6e6e6e" transform="rotate(315)"/><circle r="3.08" fill="none" stroke="#6e6e6e" stroke-width="2.42"/></g></svg>
</body></html>
